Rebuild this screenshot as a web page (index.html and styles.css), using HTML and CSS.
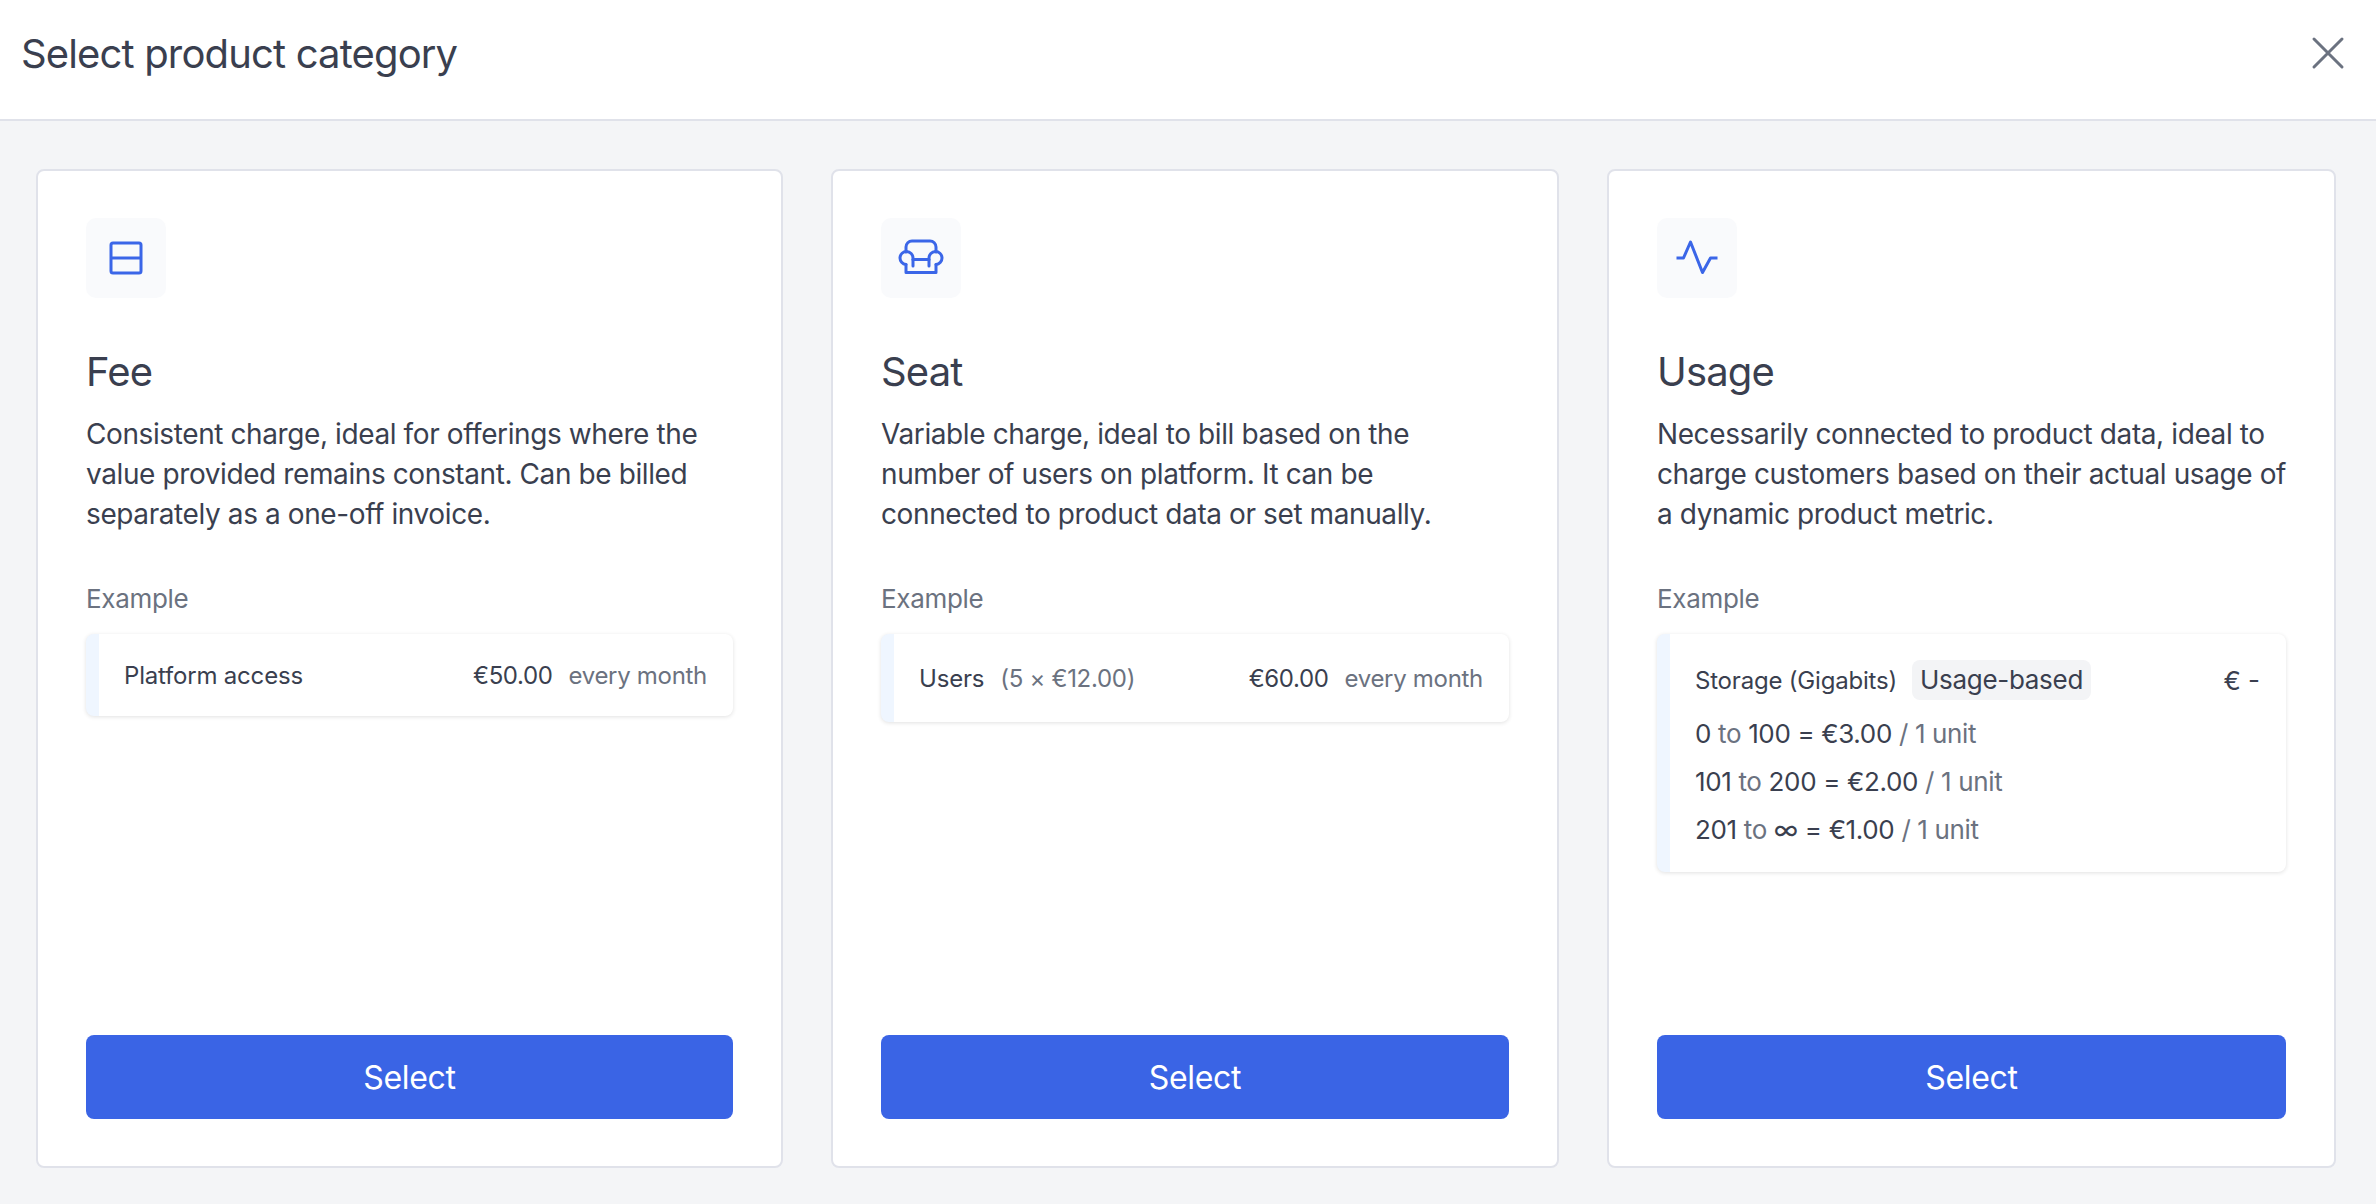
FILE: index.html
```html
<!DOCTYPE html>
<html lang="en">
<head>
  <meta charset="UTF-8" />
  <title>Select product category</title>
  <link rel="stylesheet" href="styles.css">
</head>
<body>
  <header class="modal-header">
    <h1>Select product category</h1>
    <button class="close-btn" aria-label="Close">
      <svg width="48" height="48" viewBox="0 0 48 48" fill="none" stroke="currentColor" stroke-width="3" stroke-linecap="round"><path d="M10 10 38 38M38 10 10 38"/></svg>
    </button>
  </header>

  <main class="card-list">
    <section class="card card-fee">
      <div class="icon-box">
        <svg width="48" height="48" viewBox="0 0 48 48" fill="none" stroke="currentColor" stroke-width="3" stroke-linejoin="round"><rect x="9" y="9" width="30" height="30" rx="2"/><path d="M9 24H39"/></svg>
      </div>
      <h2>Fee</h2>
      <p class="description">Consistent charge, ideal for offerings where the value provided remains constant. Can be billed separately as a one-off invoice.</p>
      <div class="example-label">Example</div>
      <div class="example-box">
        <div class="example-row">
          <span class="item-name">Platform access</span>
          <span class="item-price">€50.00</span>
          <span class="item-period">every month</span>
        </div>
      </div>
      <button class="btn-primary">Select</button>
    </section>

    <section class="card card-seat">
      <div class="icon-box">
        <svg width="48" height="48" viewBox="0 0 48 48" fill="none" stroke="currentColor" stroke-width="3" stroke-linecap="round" stroke-linejoin="round"><path d="M9 18v-5a6 6 0 0 1 6-6h18a6 6 0 0 1 6 6v5"/><path d="M9 30.5A6.5 6.5 0 1 1 16 24v8"/><path d="M39 30.5A6.5 6.5 0 1 0 32 24v8"/><path d="M16 25.5H32"/><path d="M9 30.5V38.5H39V30.5"/></svg>
      </div>
      <h2>Seat</h2>
      <p class="description">Variable charge, ideal to bill based on the number of users on platform. It can be connected to product data or set manually.</p>
      <div class="example-label">Example</div>
      <div class="example-box">
        <div class="example-row example-row-tall">
          <span class="item-name">Users</span>
          <span class="item-detail">(5 × €12.00)</span>
          <span class="item-price">€60.00</span>
          <span class="item-period">every month</span>
        </div>
      </div>
      <button class="btn-primary">Select</button>
    </section>

    <section class="card card-usage">
      <div class="icon-box">
        <svg width="48" height="48" viewBox="0 0 48 48" fill="none" stroke="currentColor" stroke-width="3" stroke-linejoin="round"><path d="M3.5 24H10.5L17.5 8 29.5 38.5 37.5 24H44.5"/></svg>
      </div>
      <h2>Usage</h2>
      <p class="description">Necessarily connected to product data, ideal to charge customers based on their actual usage of a dynamic product metric.</p>
      <div class="example-label">Example</div>
      <div class="example-box">
        <div class="usage-body">
          <div class="usage-head">
            <span class="item-name">Storage (Gigabits)</span>
            <span class="badge">Usage-based</span>
            <span class="usage-total">€ -</span>
          </div>
          <div class="tier">0 <span class="muted">to</span> 100 = €3.00 <span class="muted">/ 1 unit</span></div>
          <div class="tier">101 <span class="muted">to</span> 200 = €2.00 <span class="muted">/ 1 unit</span></div>
          <div class="tier">201 <span class="muted">to</span> ∞ = €1.00 <span class="muted">/ 1 unit</span></div>
        </div>
      </div>
      <button class="btn-primary">Select</button>
    </section>
  </main>
</body>
</html>
```

FILE: styles.css
```css
* { box-sizing: border-box; }
html, body {
  height: 100%;
}
body {
  margin: 0;
  font-family: 'Inter', sans-serif;
  color: #3a3f4f;
  background: #f4f5f7;
  display: flex;
  flex-direction: column;
}
.modal-header {
  height: 121px;
  flex: none;
  background: white;
  border-bottom: 2px solid #e0e2ea;
  padding: 30px 24px 0 21px;
  display: flex;
  justify-content: space-between;
  align-items: flex-start;
}
.modal-header h1 {
  margin: 0;
  font-size: 40px;
  line-height: 48px;
  font-weight: 400;
  letter-spacing: -0.85px;
}
.close-btn {
  border: none;
  background: none;
  padding: 0;
  margin-top: -1px;
  color: #6b7280;
  height: 48px;
  cursor: pointer;
}
.close-btn svg {
  display: block;
}
.card-list {
  flex: 1;
  display: grid;
  grid-template-columns: 747px 728px 729px;
  column-gap: 48px;
  padding: 48px 36px 36px;
}
.card {
  background: white;
  border: 2px solid #e0e2ea;
  border-radius: 8px;
  padding: 47px 48px;
  display: flex;
  flex-direction: column;
}
.icon-box {
  width: 80px;
  height: 80px;
  background: #f9fafc;
  border-radius: 10px;
  color: #3b66e8;
  display: flex;
  align-items: center;
  justify-content: center;
}
.card h2 {
  margin: 50px 0 0;
  font-size: 40px;
  line-height: 48px;
  font-weight: 400;
  letter-spacing: -0.85px;
}
.description {
  margin: 18px 0 0;
  font-size: 28px;
  line-height: 40px;
  letter-spacing: -0.4px;
}
.card-usage .description {
  margin-right: -8px;
}
.example-label {
  margin-top: 45px;
  font-size: 26px;
  line-height: 40px;
  color: #6b7280;
  letter-spacing: -0.3px;
}
.example-box {
  margin-top: 15px;
  background: white;
  border-radius: 8px;
  border-left: 13px solid #eff6ff;
  box-shadow: 0 1px 4px rgba(0, 0, 0, 0.12);
}
.example-row {
  height: 82px;
  padding: 0 26px 0 25px;
  display: flex;
  align-items: center;
  font-size: 24px;
  letter-spacing: -0.1px;
}
.example-row-tall {
  height: 88px;
}
.item-name {
  font-size: 24px;
  letter-spacing: -0.2px;
}
.item-detail {
  margin-left: 16px;
  color: #6b7280;
  letter-spacing: -0.3px;
}
.item-price {
  margin-left: auto;
  font-size: 24px;
  letter-spacing: -0.38px;
}
.item-period {
  margin-left: 16px;
  color: #6b7280;
  letter-spacing: -0.3px;
}
.usage-body {
  padding: 26px 26px 18px 25px;
}
.usage-head {
  display: flex;
  align-items: center;
  margin-bottom: 10px;
}
.badge {
  margin-left: 15px;
  background: #f3f4f6;
  border-radius: 8px;
  padding: 0 8px;
  font-size: 26px;
  line-height: 40px;
  letter-spacing: -0.3px;
}
.usage-total {
  margin-left: auto;
  font-size: 26px;
}
.tier {
  font-size: 26px;
  line-height: 48px;
  letter-spacing: -0.35px;
}
.muted {
  color: #6b7280;
}
.btn-primary {
  margin-top: auto;
  width: 100%;
  height: 84px;
  border: none;
  border-radius: 8px;
  background: #3a64e5;
  color: white;
  font-family: inherit;
  font-size: 32px;
  letter-spacing: -0.3px;
  cursor: pointer;
}
```
